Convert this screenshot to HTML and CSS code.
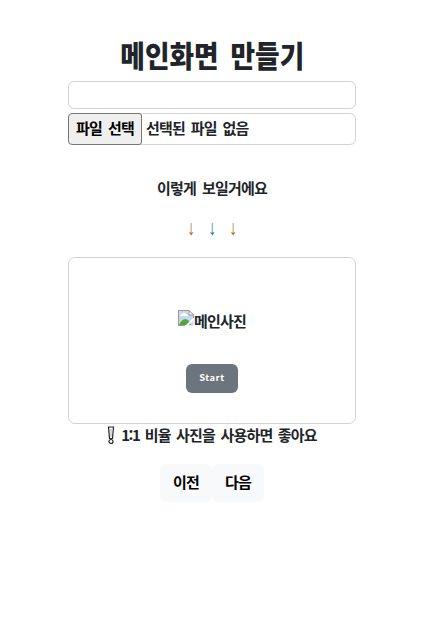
FILE: index.html
```
<!DOCTYPE html>
<html lang="ko">
<head>
<meta charset="utf-8">
<title>메인화면 만들기</title>
<link rel="stylesheet" href="styles.css">
</head>
<body>
<main class="page">
  <h1 class="title"><span>메인화면 만들기</span></h1>
  <input class="field" type="text" aria-label="제목">
  <div class="file"><button class="file-button">파일 선택</button><span class="file-name">선택된 파일 없음</span></div>
  <p class="caption">이렇게 보일거에요</p>
  <p class="arrows"><span class="warm">↓</span><span class="cool">↓</span><span class="warm">↓</span></p>
  <section class="preview">
    <div class="picture">
      <svg width="16" height="16" viewBox="0 0 16 16">
        <path d="M.5.5H11L15.5 5V15.5H.5Z" fill="#c5d7f5"/>
        <path d="M2 6Q2 4 4 4Q6 1.500 8 4Q10 4 10 6Z" fill="#fff"/>
        <path d="M1 15Q3 10 7 9Q11 9 13 15Z" fill="#55a832"/>
        <path d="M7 16L16 7V10L10 16Z" fill="#fff"/>
        <path d="M7 15.5H.5V.5H11L15.500 5V8" fill="none" stroke="#999"/>
        <path d="M11 .5V5H15.500Z" fill="#fff" stroke="#999"/>
      </svg><span>메인사진</span>
    </div>
    <button class="start">Start</button>
  </section>
  <p class="hint"><svg width="8" height="19" viewBox="0 0 8 19"><path d="M1.500 1H6.500L5.500 12.500H2.500Z" fill="#fff" stroke="#212529" stroke-width="1.200"/><path d="M4 3V11" stroke="#777" stroke-width=".6"/><circle cx="4" cy="15.500" r="2" fill="#fff" stroke="#212529" stroke-width="1.200"/></svg><span><span class="ratio">1:1</span> 비율 사진을 사용하면 좋아요</span></p>
  <nav class="nav"><button class="nav-button">이전</button><button class="nav-button">다음</button></nav>
</main>
</body>
</html>
```
FILE: styles.css
```
* { box-sizing: border-box; }
body {
  margin: 0;
  background: #fff;
  color: #212529;
  font: 700 15px/24px "Noto Sans CJK KR", sans-serif;
  letter-spacing: -.8px;
  word-spacing: 2.4px;
}
p, h1 { margin: 0; }
button {
  border: 0;
  padding: 0;
  font: inherit;
  letter-spacing: inherit;
  word-spacing: inherit;
  white-space: nowrap;
}
.page {
  width: 288px;
  margin-left: 68px;
  padding-top: 35px;
  display: flex;
  flex-direction: column;
  align-items: center;
}
.title {
  height: 46px;
  font-size: 30px;
  line-height: 38px;
  font-weight: 900;
  letter-spacing: 0;
  word-spacing: 5px;
  white-space: nowrap;
}
.title span { display: inline-block; transform: scaleX(.89); }
.field {
  width: 288px;
  height: 28px;
  border: 1px solid #d3d3d3;
  border-radius: 6px;
  padding: 0 8px;
  outline: 0;
}
.file {
  display: flex;
  width: 288px;
  height: 32px;
  margin-top: 4px;
  border: 1px solid #d3d3d3;
  border-radius: 6px;
}
.file-button {
  width: 74px;
  height: 32px;
  margin: -1px 0 0 -1px;
  padding-bottom: 2px;
  border: 1px solid #767676;
  border-radius: 4px 3px 3px 4px;
  background: #efefef;
  color: #000;
}
.file-name { margin-left: 4px; line-height: 28px; }
.caption { margin-top: 31px; }
.arrows {
  display: flex;
  height: 24px;
  margin-top: 17px;
  font: 400 16px/24px "Liberation Serif", serif;
  letter-spacing: 0;
}
.arrows span { width: 21px; text-align: center; transform: scaleY(1.3); }
.warm { color: #b9640f; }
.cool { color: #1f6fba; }
.preview {
  display: flex;
  flex-direction: column;
  align-items: center;
  width: 288px;
  height: 167px;
  margin-top: 16px;
  padding-top: 51px;
  border: 1px solid #d3d3d3;
  border-radius: 7px;
}
.picture { display: flex; height: 24px; }
.picture svg { margin-top: 1px; }
.start {
  width: 52px;
  height: 29px;
  margin-top: 31px;
  padding-bottom: 3px;
  border-radius: 6px;
  background: #6c757d;
  color: #fff;
  font: 900 10px/26px Lato, sans-serif;
  letter-spacing: .7px;
}
.hint {
  display: flex;
  height: 24px;
  line-height: 22px;
  word-spacing: 2px;
  white-space: nowrap;
}
.hint svg { margin: 2px 6px 0 0; }
.ratio { letter-spacing: -1.5px; }
.nav { display: flex; margin-top: 16px; }
.nav-button {
  width: 52px;
  height: 38px;
  padding-bottom: 2px;
  border-radius: 7px;
  background: #f8f9fa;
  color: #000;
}
```
